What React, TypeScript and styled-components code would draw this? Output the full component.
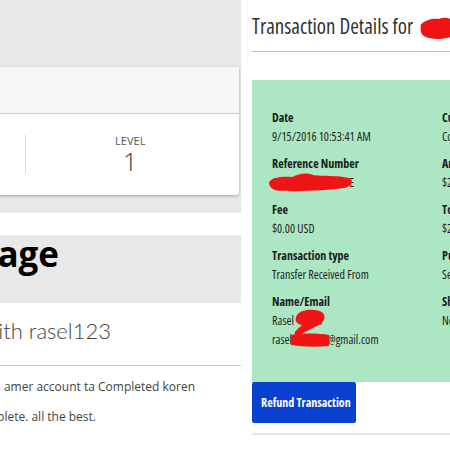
import React from 'react'
import styled, { createGlobalStyle } from 'styled-components'

const GlobalStyle = createGlobalStyle`
  html, body {
    margin: 0;
    padding: 0;
    background: #fff;
  }
  body {
    width: 450px;
    height: 450px;
    overflow: hidden;
    font-family: 'Open Sans', 'Liberation Sans', sans-serif;
    color: #333;
  }
`

type Field = {
  label: string
  value: React.ReactNode
}

export default function App() {
  const fields: Field[] = [
    { label: 'Date', value: '9/15/2016 10:53:41 AM' },
    { label: 'Current Status', value: 'Completed' },
    {
      label: 'Reference Number',
      value: (
        <>
          C
          <Scribble $w={72}>
            <Blob width={84} height={20} viewBox="0 0 86 20" style={{ left: -8, top: -3 }}>
              <path d="M0 10 C4 5 14 4 24 5 C30 1 40 0 46 3 C56 4 70 3 82 6 C87 9 85 14 78 16 C60 19 30 20 10 19 C3 18 0 15 0 10 Z" />
            </Blob>
          </Scribble>
          E
        </>
      ),
    },
    { label: 'Amount', value: '$25.00 USD' },
    { label: 'Fee', value: '$0.00 USD' },
    { label: 'Total', value: '$25.00 USD' },
    { label: 'Transaction type', value: 'Transfer Received From' },
    { label: 'Purpose', value: 'Service' },
    {
      label: 'Name/Email',
      value: (
        <>
          Rasel
          <Scribble $w={26}>
            <Blob width={32} height={27} viewBox="0 0 32 27" style={{ left: -1, top: -4 }}>
              <path d="M4 6 C8 0 24 -1 30 4 C34 9 30 15 22 18 L14 22 C10 24 6 27 2 26 C0 23 5 20 9 16 C3 15 1 11 4 6 Z" />
            </Blob>
          </Scribble>
          r
          <br />
          rasel
          <Scribble $w={36}>
            <Blob width={38} height={12} viewBox="0 0 38 12" style={{ left: -1, top: 2 }}>
              <path d="M0 1 C10 -1 28 -1 38 1 L38 12 C26 13 12 13 0 11 Z" />
            </Blob>
          </Scribble>
          @gmail.com
        </>
      ),
    },
    { label: 'Shipping address', value: 'None' },
  ]

  return (
    <>
      <GlobalStyle />
      <Page>
        <Left>
          <TopBand>
            <Card>
              <CardHead />
              <Stats>
                <Stat />
                <Stat>
                  <StatLabel>Level</StatLabel>
                  <StatValue>1</StatValue>
                </Stat>
              </Stats>
            </Card>
          </TopBand>
          <HeadingBand>
            <ClipLine $end={59}>
              <Heading>Message</Heading>
            </ClipLine>
          </HeadingBand>
          <SubHead>
            <ClipLine $end={111}>
              <SubTitle>Conversation with rasel123</SubTitle>
            </ClipLine>
          </SubHead>
          <Note>
            <ClipLine $end={195}>
              <span>Thanks for the transaction. amer account ta Completed koren</span>
            </ClipLine>
          </Note>
          <Note>
            <ClipLine $end={96}>
              <span>Ami order complete. all the best.</span>
            </ClipLine>
          </Note>
        </Left>

        <Right>
          <Title>
            Transaction Details for
            <Scribble $w={40}>
              <Blob width={34} height={23} viewBox="0 0 34 24" style={{ left: 6, top: 4 }}>
                <path d="M1 8 C6 3 14 1 20 2 C26 0 31 1 34 3 L34 20 C26 23 18 24 10 22 C6 21 2 19 1 15 Z" />
              </Blob>
            </Scribble>
          </Title>
          <Panel>
            <FieldGrid>
              {fields.map((f) => (
                <div key={f.label}>
                  <Label>{f.label}</Label>
                  <Value>{f.value}</Value>
                </div>
              ))}
            </FieldGrid>
          </Panel>
          <RefundButton>Refund Transaction</RefundButton>
          <Rule />
        </Right>
      </Page>
    </>
  )
}

const Page = styled.div`
  display: flex;
  gap: 11px;
  width: 450px;
  height: 450px;
  overflow: hidden;
`

const Left = styled.div`
  width: 241px;
  flex-shrink: 0;
  overflow: hidden;
`

const TopBand = styled.div`
  background: #e8e8e8;
  padding: 67px 2px 18px 0;
`

const Card = styled.div`
  margin-left: -189px;
  background: #fff;
  border-radius: 3px;
  box-shadow: 0 1px 3px rgba(0, 0, 0, 0.3);
`

const CardHead = styled.div`
  height: 46px;
  background: #f7f7f7;
  border-bottom: 1px solid #c9c9c9;
  border-radius: 3px 3px 0 0;
`

const Stats = styled.div`
  display: flex;
  padding: 21px 4px 22px;
`

const Stat = styled.div`
  width: 210px;
  height: 38px;
  text-align: center;

  & + & {
    border-left: 1px solid #d8d8d8;
  }
`

const StatLabel = styled.div`
  font-size: 11px;
  line-height: 12px;
  color: #555;
  text-transform: uppercase;
`

const StatValue = styled.div`
  font-size: 26px;
  line-height: 28px;
  font-weight: 300;
  color: #444;
`

const HeadingBand = styled.div`
  margin-top: 22px;
  height: 68px;
  background: #e8e8e8;
`

const ClipLine = styled.div<{ $end: number }>`
  display: flex;
  justify-content: flex-end;
  width: ${(p) => p.$end}px;
  white-space: nowrap;

  & > * {
    flex-shrink: 0;
  }
`

const Heading = styled.h1`
  margin: 0;
  padding-top: 1px;
  font-size: 35px;
  line-height: 36px;
  font-weight: 700;
  color: #000;
`

const SubHead = styled.div`
  margin-top: 13px;
  padding-bottom: 19px;
  border-bottom: 1px solid #c8c8c8;
`

const SubTitle = styled.h2`
  margin: 0;
  font-family: Lato, 'Open Sans', sans-serif;
  font-size: 22px;
  line-height: 30px;
  font-weight: 300;
  color: #444;
`

const Note = styled.p`
  margin: 12px 0 0;
  font-size: 12px;
  line-height: 18px;
  color: #444;
`

const Right = styled.div`
  width: 420px;
  flex-shrink: 0;
  font-family: 'Open Sans', 'Liberation Sans Narrow', sans-serif;
  font-stretch: 75%;
`

const Title = styled.h2`
  margin: 0;
  padding: 11px 0 10px;
  font-size: 21px;
  line-height: 30px;
  font-weight: 400;
  color: #333;
  border-bottom: 1px solid #bdbdbd;
  white-space: nowrap;
`

const Scribble = styled.span<{ $w: number }>`
  position: relative;
  display: inline-block;
  width: ${(p) => p.$w}px;
  height: 1em;
  vertical-align: baseline;
`

const Blob = styled.svg`
  position: absolute;
  fill: #f01515;
  overflow: visible;
`

const Panel = styled.div`
  margin-top: 28px;
  padding: 28px 0 33px 20px;
  background: #ade6c3;
`

const FieldGrid = styled.div`
  display: grid;
  grid-template-columns: 170px 170px;
  row-gap: 8px;
`

const Label = styled.div`
  font-size: 12px;
  line-height: 19px;
  font-weight: 700;
  color: #1a1a1a;
  white-space: nowrap;
`

const Value = styled.div`
  font-size: 12px;
  line-height: 19px;
  color: #1e1e1e;
  white-space: nowrap;
`

const RefundButton = styled.button`
  display: block;
  width: 104px;
  height: 41px;
  padding: 0 9px;
  border: none;
  border-radius: 2px;
  background: #0a40cf;
  color: #fff;
  font-family: inherit;
  font-stretch: inherit;
  font-size: 12px;
  font-weight: 700;
  text-align: left;
  white-space: nowrap;
`

const Rule = styled.div`
  margin-top: 10px;
  border-top: 2px solid #e6e6e6;
`
